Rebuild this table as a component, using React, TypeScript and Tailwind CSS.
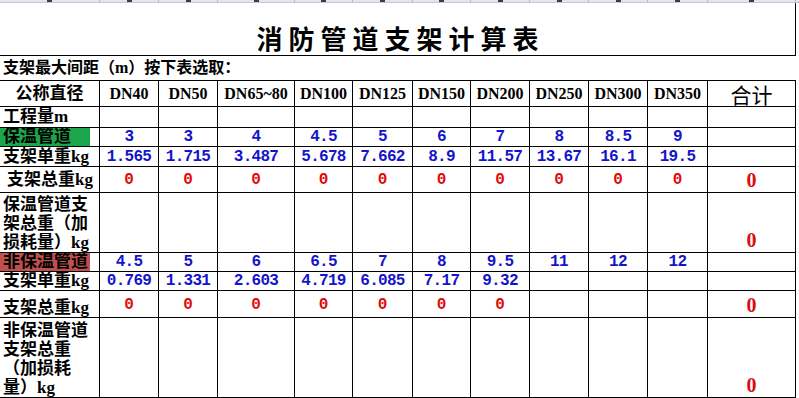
import type { ReactNode } from "react";

const sizes = ["DN40", "DN50", "DN65~80", "DN100", "DN125", "DN150", "DN200", "DN250", "DN300", "DN350"];

const insulated = {
  spacing: ["3", "3", "4", "4.5", "5", "6", "7", "8", "8.5", "9"],
  weight: ["1.565", "1.715", "3.487", "5.678", "7.662", "8.9", "11.57", "13.67", "16.1", "19.5"],
  total: ["0", "0", "0", "0", "0", "0", "0", "0", "0", "0"],
};

const bare = {
  spacing: ["4.5", "5", "6", "6.5", "7", "8", "9.5", "11", "12", "12"],
  weight: ["0.769", "1.331", "2.603", "4.719", "6.085", "7.17", "9.32", "", "", ""],
  total: ["0", "0", "0", "0", "0", "0", "0", "", "", ""],
};

const empty = Array.from({ length: 10 }, () => "");

const label = "font-['Liberation_Serif','Noto_Sans_CJK_SC',sans-serif] font-bold text-[17px] text-black";
const blue = "font-['Liberation_Mono',monospace] font-bold text-[16px] tracking-[-0.7px] text-[#1414cc]";
const red = "font-['Liberation_Mono',monospace] font-bold text-[16px] text-[#e00b0b]";
const bigRed = "font-['Liberation_Serif',serif] font-bold text-[20px] leading-[22px] text-[#e00b0b]";

function Cell({ children, className = "" }: { children?: ReactNode; className?: string }) {
  return <div className={`flex border-r border-b border-black ${className}`}>{children}</div>;
}

function Values({ items, tone, className = "items-center" }: { items: string[]; tone: string; className?: string }) {
  return (
    <>
      {items.map((v, i) => (
        <Cell key={i} className={`justify-center whitespace-pre leading-[16px] ${className} ${tone}`}>
          {v}
        </Cell>
      ))}
    </>
  );
}

function Total({ zero, className = "items-center" }: { zero?: boolean; className?: string }) {
  return <Cell className={`justify-center ${className} ${bigRed}`}>{zero ? "0" : ""}</Cell>;
}

export default function App() {
  return (
    <div className="h-[398px] w-[799px] overflow-hidden bg-white">
      {/* column header strip: only the bottom edge of the letters shows */}
      <div className="grid h-[3px] grid-cols-[100px_59px_59px_77px_58px_60px_58px_59px_59px_59px_60px_88px_1fr] border-b border-[#c4c8d0] bg-[#e3e6ec]">
        {Array.from({ length: 12 }, (_, i) => (
          <div key={i} className="flex items-start justify-center border-r border-[#b4b9c3]">
            <span className="h-[2px] w-[5px] bg-[#3a3d45]" />
          </div>
        ))}
        <div />
      </div>

      <div className="grid w-[796px] grid-cols-[100px_59px_59px_77px_58px_60px_58px_59px_59px_59px_60px_88px] grid-rows-[53px_25px_26px_21px_19px_20px_26px_60px_19px_19px_27px_80px]">
        <Cell className="col-span-12 items-end justify-center pb-[1px]">
          <span className="pl-[6px] font-['Noto_Sans_CJK_SC',sans-serif] text-[26px] font-bold leading-[32px] tracking-[6px] text-black">
            消防管道支架计算表
          </span>
        </Cell>

        <Cell className="col-span-12 items-center border-r-0 pl-[3px]">
          <span className="font-['Liberation_Serif','Noto_Sans_CJK_SC',sans-serif] text-[16px] font-bold leading-[20px]">
            支架最大间距（m）按下表选取：
          </span>
        </Cell>

        <Cell className={`items-center justify-center ${label}`}>公称直径</Cell>
        {sizes.map((s) => (
          <Cell key={s} className="items-center justify-center font-['Liberation_Serif',serif] text-[16px] font-bold">
            {s}
          </Cell>
        ))}
        <Cell className="items-center justify-center font-['Noto_Sans_CJK_SC',sans-serif] text-[21px] leading-[24px]">合计</Cell>

        <Cell className={`items-end pl-[3px] leading-[20px] ${label}`}>工程量m</Cell>
        <Values items={empty} tone={blue} />
        <Total />

        <Cell className={`items-stretch ${label}`}>
          <span className="flex w-[90px] items-center bg-[#1ba64b] pl-[3px] leading-[18px]">保温管道</span>
        </Cell>
        <Values items={insulated.spacing} tone={blue} />
        <Total />

        <Cell className={`items-center pl-[3px] leading-[18px] ${label}`}>支架单重kg</Cell>
        <Values items={insulated.weight} tone={blue} />
        <Total />

        <Cell className={`items-center pl-[7px] leading-[18px] ${label}`}>支架总重kg</Cell>
        <Values items={insulated.total} tone={red} />
        <Total zero />

        <Cell className={`items-end pl-[3px] leading-[19px] ${label}`}>
          <span>
            保温管道支
            <br />
            架总重（加
            <br />
            损耗量）kg
          </span>
        </Cell>
        <Values items={empty} tone={blue} />
        <Total zero className="items-end pb-[1px]" />

        <Cell className={`items-stretch ${label}`}>
          <span className="flex w-[90px] items-center bg-[#c0504d] pl-[3px] leading-[18px]">非保温管道</span>
        </Cell>
        <Values items={bare.spacing} tone={blue} />
        <Total />

        <Cell className={`items-center pl-[3px] leading-[18px] ${label}`}>支架单重kg</Cell>
        <Values items={bare.weight} tone={blue} />
        <Total />

        <Cell className={`items-end pl-[3px] leading-[18px] ${label}`}>支架总重kg</Cell>
        <Values items={bare.total} tone={red} className="items-center pt-[2px]" />
        <Total zero className="items-center pt-[2px]" />

        <Cell className={`items-end pl-[3px] leading-[19px] ${label}`}>
          <span>
            非保温管道
            <br />
            支架总重
            <br />
            （加损耗
            <br />
            量）kg
          </span>
        </Cell>
        <Values items={empty} tone={blue} />
        <Total zero className="items-end pb-[1px]" />
      </div>
    </div>
  );
}
